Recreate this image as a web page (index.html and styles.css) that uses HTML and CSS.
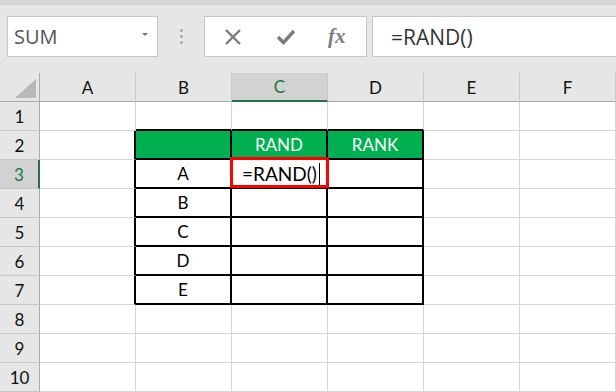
FILE: index.html
```html
<!DOCTYPE html>
<html lang="en">
<head>
    <meta charset="UTF-8">
    <meta name="viewport" content="width=device-width, initial-scale=1.0">
    <title>RAND</title>
    <link rel="stylesheet" href="styles.css">
</head>
<body>

    <!-- Barra de formulas -->
    <div class="toolbar">
        <div class="name-box">
            <span>SUM</span>
            <span class="drop"></span>
        </div>
        <div class="grip"><i></i><i></i><i></i></div>
        <div class="icon-box">
            <svg width="18" height="18" viewBox="0 0 18 18"><path d="M2 2 L16 16 M16 2 L2 16" stroke="#7b7b7b" stroke-width="2.4" fill="none"/></svg>
            <svg width="20" height="18" viewBox="0 0 20 18"><path d="M2 9 L7.5 14.5 L18 3" stroke="#7b7b7b" stroke-width="3.4" fill="none"/></svg>
            <span class="fx">fx</span>
        </div>
        <div class="formula">=RAND()</div>
    </div>

    <!-- Hoja -->
    <div class="sheet">
        <div class="corner"><span class="tri"></span></div>
        <div class="col-head">A</div>
        <div class="col-head">B</div>
        <div class="col-head sel">C</div>
        <div class="col-head">D</div>
        <div class="col-head">E</div>
        <div class="col-head">F</div>

        <div class="row-head">1</div>
        <div class="cell"></div>
        <div class="cell t-top"></div>
        <div class="cell t-top"></div>
        <div class="cell t-top"></div>
        <div class="cell"></div>
        <div class="cell"></div>

        <div class="row-head">2</div>
        <div class="cell t-left"></div>
        <div class="cell t green"></div>
        <div class="cell t green">RAND</div>
        <div class="cell t green">RANK</div>
        <div class="cell"></div>
        <div class="cell"></div>

        <div class="row-head sel">3</div>
        <div class="cell t-left"></div>
        <div class="cell t">A</div>
        <div class="cell t active">=RAND()<span class="caret"></span></div>
        <div class="cell t"></div>
        <div class="cell"></div>
        <div class="cell"></div>

        <div class="row-head">4</div>
        <div class="cell t-left"></div>
        <div class="cell t">B</div>
        <div class="cell t"></div>
        <div class="cell t"></div>
        <div class="cell"></div>
        <div class="cell"></div>

        <div class="row-head">5</div>
        <div class="cell t-left"></div>
        <div class="cell t">C</div>
        <div class="cell t"></div>
        <div class="cell t"></div>
        <div class="cell"></div>
        <div class="cell"></div>

        <div class="row-head">6</div>
        <div class="cell t-left"></div>
        <div class="cell t">D</div>
        <div class="cell t"></div>
        <div class="cell t"></div>
        <div class="cell"></div>
        <div class="cell"></div>

        <div class="row-head">7</div>
        <div class="cell t-left"></div>
        <div class="cell t">E</div>
        <div class="cell t"></div>
        <div class="cell t"></div>
        <div class="cell"></div>
        <div class="cell"></div>

        <div class="row-head">8</div>
        <div class="cell"></div>
        <div class="cell"></div>
        <div class="cell"></div>
        <div class="cell"></div>
        <div class="cell"></div>
        <div class="cell"></div>

        <div class="row-head">9</div>
        <div class="cell"></div>
        <div class="cell"></div>
        <div class="cell"></div>
        <div class="cell"></div>
        <div class="cell"></div>
        <div class="cell"></div>

        <div class="row-head">10</div>
        <div class="cell"></div>
        <div class="cell"></div>
        <div class="cell"></div>
        <div class="cell"></div>
        <div class="cell"></div>
        <div class="cell"></div>
    </div>

</body>
</html>
```

FILE: styles.css
```css
body {
    margin: 0;
    background-color: #e6e6e6;
    font-family: 'Lato', 'Noto Sans', sans-serif;
    color: #000;
    overflow: hidden;
}

/* Barra superior */
.toolbar {
    height: 73px;
    box-sizing: border-box;
    padding: 11px 0 0 7px;
    display: flex;
    align-items: flex-start;
    border-top: 5px solid #d5d5d5;
}
.name-box {
    width: 151px;
    height: 41px;
    box-sizing: border-box;
    background-color: #fff;
    border: 1px solid #c6c6c6;
    display: flex;
    align-items: center;
    justify-content: space-between;
    padding: 0 9px 0 6px;
    font-family: 'Open Sans', sans-serif;
    font-size: 20px;
    color: #555;
}
.drop {
    width: 0;
    height: 0;
    border-left: 3px solid transparent;
    border-right: 3px solid transparent;
    border-top: 3px solid #777;
    margin-top: -4px;
}
.grip {
    width: 46px;
    height: 41px;
    display: flex;
    flex-direction: column;
    align-items: center;
    justify-content: center;
    gap: 3px;
}
.grip i {
    width: 3px;
    height: 3px;
    background-color: #b4b4b4;
}
.icon-box {
    width: 163px;
    height: 41px;
    box-sizing: border-box;
    background-color: #fff;
    border: 1px solid #c6c6c6;
    display: flex;
    align-items: center;
    padding-left: 19px;
    gap: 34px;
}
.fx {
    font-family: 'Liberation Serif', serif;
    font-style: italic;
    font-weight: bold;
    font-size: 21px;
    color: #808080;
    margin-left: -2px;
}
.formula {
    flex: 1;
    height: 41px;
    margin-left: 5px;
    box-sizing: border-box;
    background-color: #fff;
    border: 1px solid #c6c6c6;
    border-right: none;
    padding-left: 18px;
    display: flex;
    align-items: center;
    font-family: 'Open Sans', sans-serif;
    font-size: 21px;
    color: #333;
}

/* Hoja de calculo */
.sheet {
    display: grid;
    grid-template-columns: 40px repeat(6, 96px);
    grid-template-rows: 29px repeat(10, 29px);
    background-color: #fff;
}
.corner {
    background-color: #e6e6e6;
    border-right: 1px solid #ababab;
    border-bottom: 1px solid #ababab;
    box-sizing: border-box;
    position: relative;
}
.tri {
    position: absolute;
    right: 3px;
    bottom: 3px;
    width: 0;
    height: 0;
    border-left: 21px solid transparent;
    border-bottom: 19px solid #b8b8b8;
}
.col-head {
    background-color: #e6e6e6;
    border-right: 1px solid #c8c8c8;
    border-bottom: 1px solid #ababab;
    box-sizing: border-box;
    display: flex;
    align-items: center;
    justify-content: center;
    font-size: 17px;
    color: #111;
}
.col-head.sel {
    background-color: #d2d2d2;
    border-bottom: 2px solid #217346;
    color: #217346;
}
.row-head {
    background-color: #e6e6e6;
    border-right: 1px solid #ababab;
    border-bottom: 1px solid #c8c8c8;
    box-sizing: border-box;
    display: flex;
    align-items: center;
    justify-content: center;
    font-size: 17px;
    color: #111;
}
.row-head.sel {
    background-color: #d2d2d2;
    border-right: 2px solid #217346;
    color: #217346;
}
.cell {
    border-right: 1px solid #d4d4d4;
    border-bottom: 1px solid #d4d4d4;
    box-sizing: border-box;
    display: flex;
    align-items: center;
    justify-content: center;
    font-size: 17px;
}
.cell.t {
    border-right: 2px solid #000;
    border-bottom: 2px solid #000;
}
.cell.t-top {
    border-bottom: 2px solid #000;
}
.cell.t-left {
    border-right: 2px solid #000;
}
.cell.green {
    background-color: #00b050;
    color: #fff;
}
.cell.active {
    position: relative;
    justify-content: flex-start;
    padding-left: 10px;
    font-size: 19px;
}
/* Marco rojo de la celda activa */
.cell.active::after {
    content: '';
    position: absolute;
    left: -2px;
    top: -3px;
    right: -3px;
    bottom: -1px;
    border: 3px solid #ff0000;
}
.caret {
    width: 1px;
    height: 22px;
    background-color: #000;
    margin-left: 2px;
}
```
